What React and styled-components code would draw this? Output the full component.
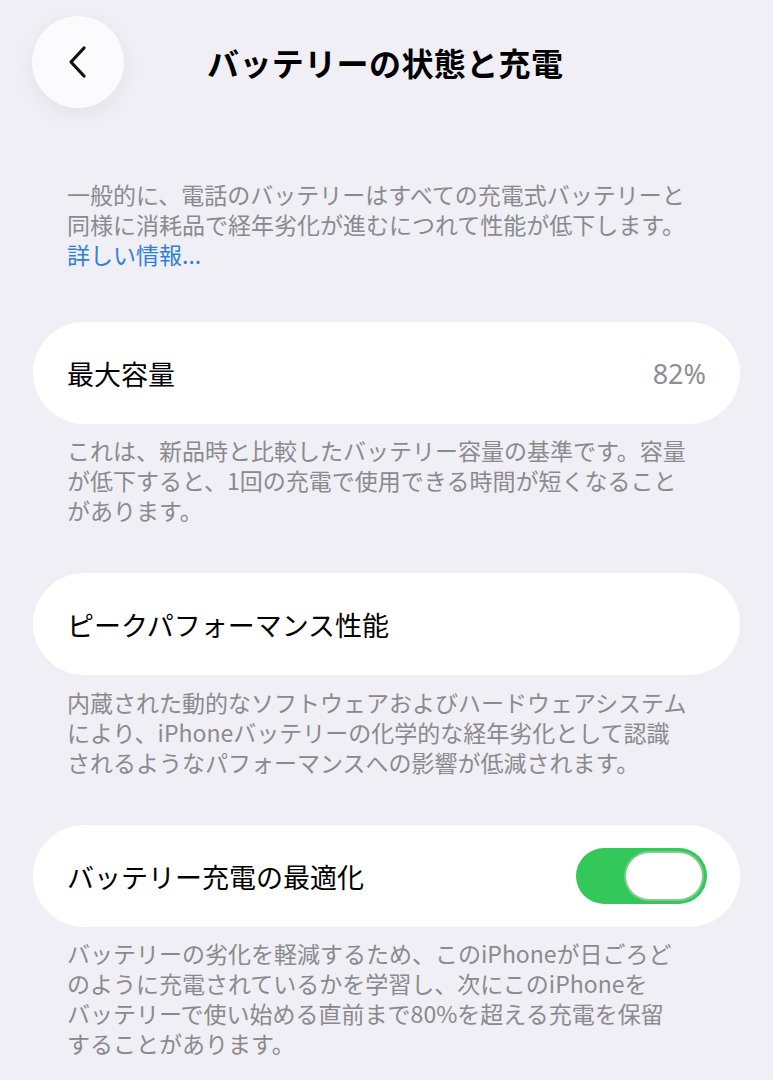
import React, { useState } from "react";
import styled, { createGlobalStyle } from "styled-components";

const GlobalStyle = createGlobalStyle`
  body {
    margin: 0;
    background: #f0eff5;
    font-family: "Noto Sans CJK JP", "Noto Sans", sans-serif;
    -webkit-font-smoothing: antialiased;
  }
`;

const Page = styled.div`
  width: 773px;
  min-height: 1080px;
  background: #f0eff5;
  display: flex;
  flex-direction: column;
`;

const Header = styled.div`
  display: flex;
  align-items: center;
  padding: 16px 0 0 32px;
  height: 92px;
`;

const BackButton = styled.button`
  width: 92px;
  height: 92px;
  border-radius: 50%;
  border: none;
  background: #fbfbfd;
  box-shadow: 0 6px 24px rgba(0, 0, 0, 0.06);
  display: flex;
  align-items: center;
  justify-content: center;
  padding: 0;
  cursor: pointer;
`;

const Title = styled.h1`
  margin: 0 0 0 83px;
  font-size: 32px;
  font-weight: 700;
  color: #000;
  letter-spacing: 0.4px;
`;

const Content = styled.div`
  display: flex;
  flex-direction: column;
  padding: 0 33px;
`;

const Note = styled.p`
  margin: ${(p) => p.$top || 0}px 0 0;
  padding: 0 34px;
  font-size: 23px;
  line-height: 30px;
  color: #8a8a8e;
  white-space: nowrap;
`;

const Line = styled.span`
  display: block;
  height: 30px;
`;

const Link = styled.a`
  color: #2f80d9;
  text-decoration: none;
`;

const Card = styled.div`
  margin-top: ${(p) => p.$top}px;
  height: 102px;
  border-radius: 51px;
  background: #fff;
  display: flex;
  align-items: center;
  justify-content: space-between;
  padding: 0 34px;
`;

const Label = styled.span`
  font-size: 27px;
  color: #000;
`;

const Value = styled.span`
  font-family: "Noto Sans", sans-serif;
  font-size: 27px;
  color: #8e8e93;
`;

const Switch = styled.button`
  width: 131px;
  height: 56px;
  border-radius: 28px;
  border: none;
  padding: 3px;
  margin-right: -1px;
  background: ${(p) => (p.$on ? "#34c759" : "#e5e5ea")};
  display: flex;
  justify-content: ${(p) => (p.$on ? "flex-end" : "flex-start")};
  cursor: pointer;
`;

const Knob = styled.span`
  width: 80px;
  height: 50px;
  border-radius: 25px;
  background: #fff;
  box-sizing: border-box;
  border: 2px solid rgba(40, 170, 70, 0.6);
`;

const notes = {
  capacity: [
    "これは、新品時と比較したバッテリー容量の基準です。容量",
    "が低下すると、1回の充電で使用できる時間が短くなること",
    "があります。",
  ],
  peak: [
    "内蔵された動的なソフトウェアおよびハードウェアシステム",
    "により、iPhoneバッテリーの化学的な経年劣化として認識",
    "されるようなパフォーマンスへの影響が低減されます。",
  ],
  charging: [
    "バッテリーの劣化を軽減するため、このiPhoneが日ごろど",
    "のように充電されているかを学習し、次にこのiPhoneを",
    "バッテリーで使い始める直前まで80%を超える充電を保留",
    "することがあります。",
  ],
};

const Footer = ({ lines, top }) => (
  <Note $top={top}>
    {lines.map((l) => (
      <Line key={l}>{l}</Line>
    ))}
  </Note>
);

export default function App() {
  const [optimized, setOptimized] = useState(true);

  return (
    <Page>
      <GlobalStyle />
      <Header>
        <BackButton aria-label="戻る">
          <svg width="22" height="34" viewBox="0 0 22 34">
            <polyline
              points="17,3 4,17 17,31"
              fill="none"
              stroke="#111"
              strokeWidth="3.2"
              strokeLinecap="round"
              strokeLinejoin="round"
            />
          </svg>
        </BackButton>
        <Title>バッテリーの状態と充電</Title>
      </Header>

      <Content>
        <Note $top={71}>
          <Line>一般的に、電話のバッテリーはすべての充電式バッテリーと</Line>
          <Line>同様に消耗品で経年劣化が進むにつれて性能が低下します。</Line>
          <Line>
            <Link href="#">詳しい情報...</Link>
          </Line>
        </Note>

        <Card $top={53}>
          <Label>最大容量</Label>
          <Value>82%</Value>
        </Card>
        <Footer lines={notes.capacity} top={11} />

        <Card $top={48}>
          <Label>ピークパフォーマンス性能</Label>
        </Card>
        <Footer lines={notes.peak} top={12} />

        <Card $top={48}>
          <Label>バッテリー充電の最適化</Label>
          <Switch
            $on={optimized}
            aria-pressed={optimized}
            onClick={() => setOptimized(!optimized)}
          >
            <Knob />
          </Switch>
        </Card>
        <Footer lines={notes.charging} top={11} />
      </Content>
    </Page>
  );
}
